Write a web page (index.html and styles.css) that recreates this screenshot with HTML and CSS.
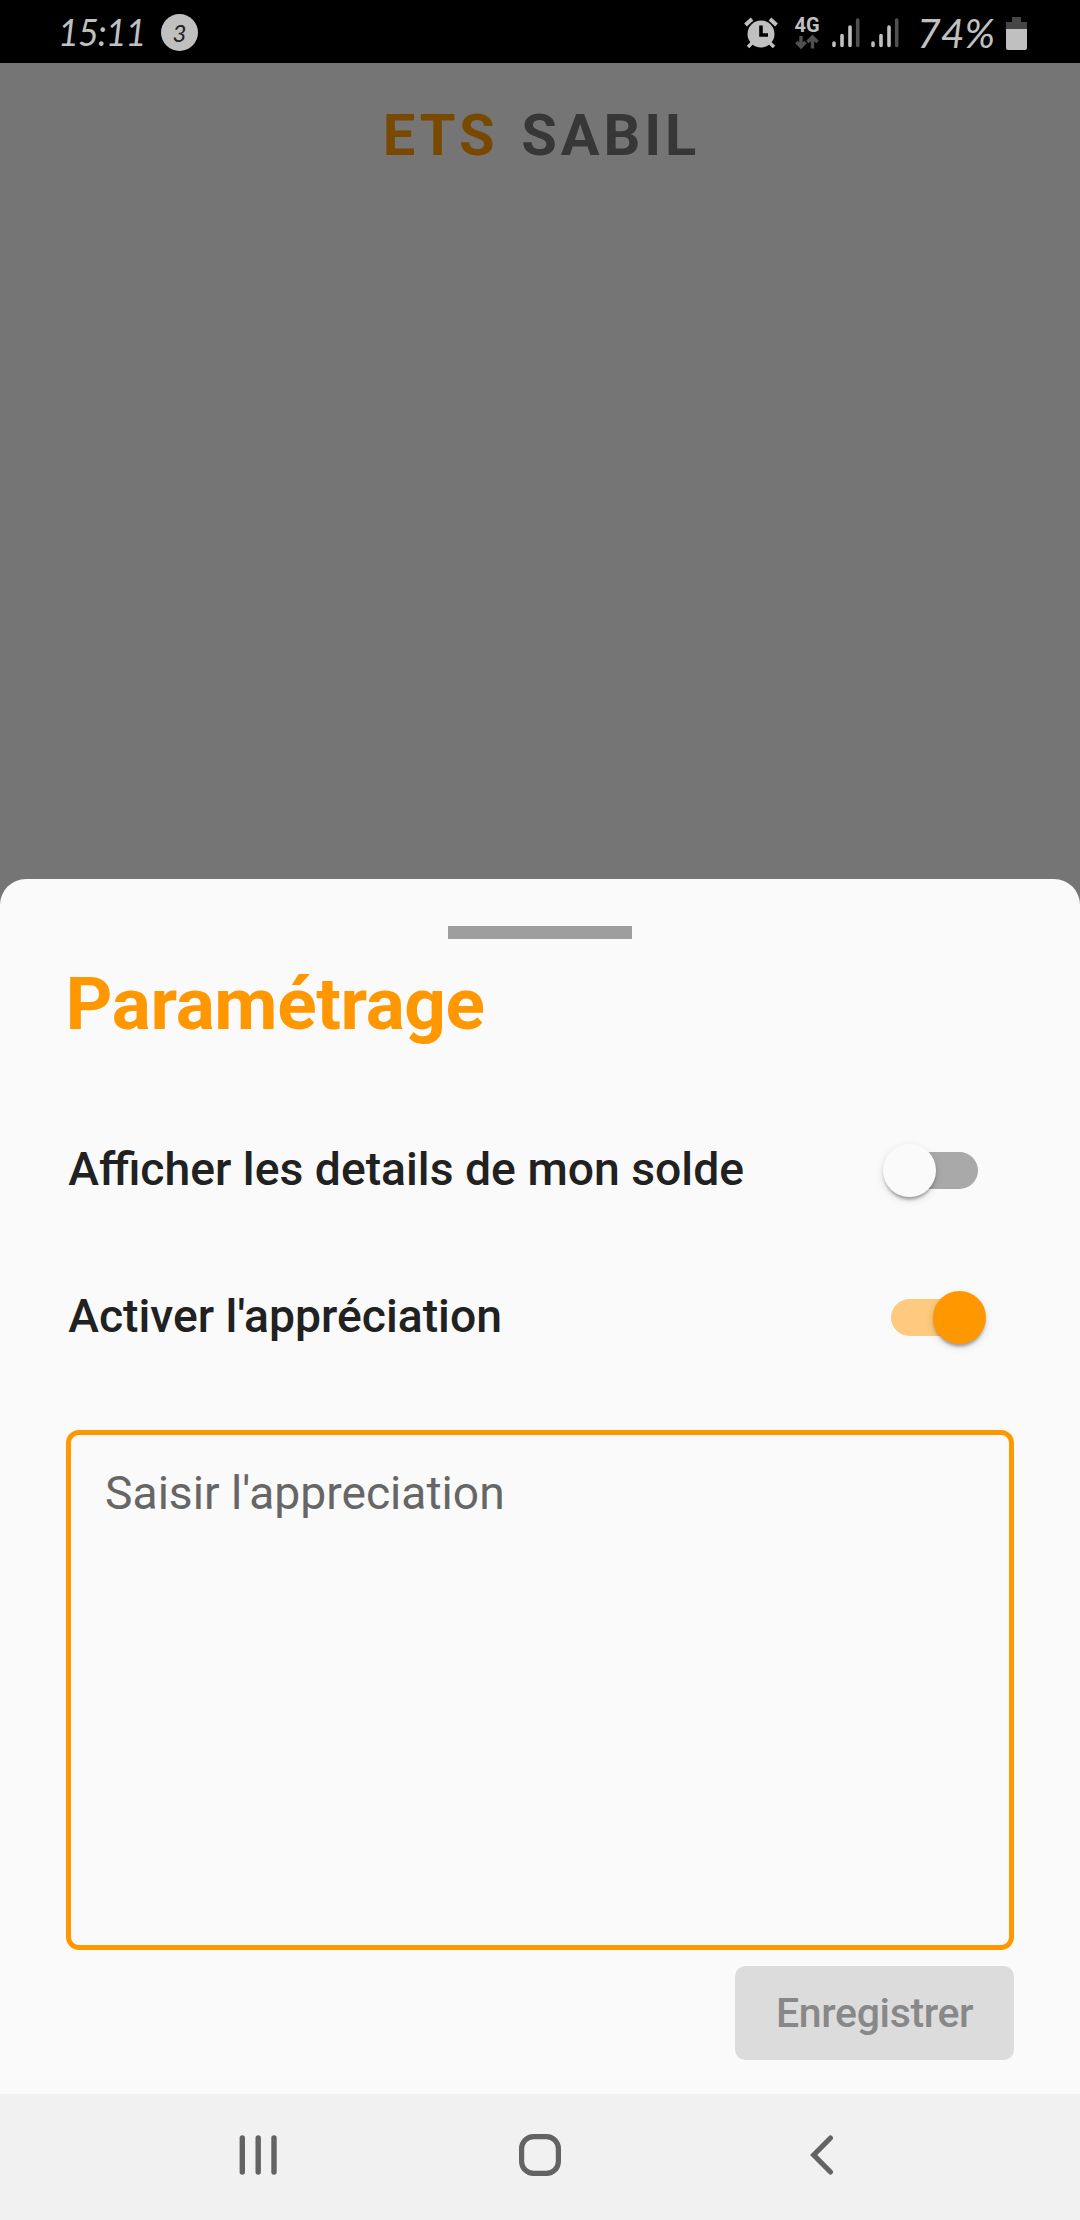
FILE: index.html
```html
<!DOCTYPE html>
<html lang="fr">
<head>
<meta charset="utf-8">
<title>ETS SABIL</title>
<link rel="stylesheet" href="styles.css">
</head>
<body>
<div class="screen">
  <header class="status">
    <span class="clock">15:11</span>
    <span class="count">3</span>
    <div class="status-right">
      <svg class="alarm" width="34" height="32" viewBox="0 0 34 32">
        <g stroke="#c0c0c0" stroke-linecap="butt" fill="none">
          <path d="M1.500 8 8 2M26 2l6.500 6" stroke-width="4"/>
          <path d="M8 26l-4 4M26 26l4 4" stroke-width="3.500"/>
        </g>
        <circle cx="17" cy="17" r="13.500" fill="#c0c0c0"/>
        <path d="M17 8.500v9.500h7" fill="none" stroke="#000" stroke-width="3.600"/>
      </svg>
      <div class="network">
        <span class="network-type">4G</span>
        <svg width="24" height="14" viewBox="0 0 24 14" fill="none" stroke="#505050" stroke-width="3.400">
          <path d="M6 1v11M1.500 7 6 11.800 10.500 7M17.500 13.500V2M12.500 7 17.500 2l5 5"/>
        </svg>
      </div>
      <svg class="signal" width="28" height="30" viewBox="0 0 28 30" stroke-width="3.600" stroke-linecap="round">
        <path d="M2 25v2.500M10 17.500v10M18 9v18.500" stroke="#c0c0c0"/><path d="M25.700 2v25.500" stroke="#505050"/>
      </svg>
      <svg class="signal" width="28" height="30" viewBox="0 0 28 30" stroke-width="3.600" stroke-linecap="round">
        <path d="M2 25v2.500M10 17.500v10M18 9v18.500" stroke="#c0c0c0"/><path d="M25.700 2v25.500" stroke="#505050"/>
      </svg>
      <span class="percent">74%</span>
      <svg width="21" height="33" viewBox="0 0 21 33">
        <path d="M6 0h9v5h6v8H0V5h6z" fill="#464646"/>
        <path d="M0 12h21v19q0 2-2 2H2q-2 0-2-2z" fill="#c0c0c0"/>
      </svg>
    </div>
  </header>

  <div class="backdrop">
    <h1 class="brand"><span class="brand-accent">ETS</span> SABIL</h1>
  </div>

  <main class="sheet">
    <div class="handle"></div>
    <h2 class="title">Paramétrage</h2>
    <div class="row">
      <span class="label">Afficher les details de mon solde</span>
      <span class="switch"><i class="thumb"></i></span>
    </div>
    <div class="row">
      <span class="label">Activer l'appréciation</span>
      <span class="switch switch-on"><i class="thumb"></i></span>
    </div>
    <div class="field">Saisir l'appreciation</div>
    <button class="save" disabled>Enregistrer</button>
  </main>

  <nav class="navbar">
    <svg width="44" height="44" viewBox="0 0 44 44" stroke="#636363" stroke-width="5.400" stroke-linecap="round">
      <path d="M6.300 5v34M22.200 5v34M38 5v34"/>
    </svg>
    <svg width="44" height="44" viewBox="0 0 44 44" fill="none" stroke="#636363" stroke-width="5.200">
      <rect x="3.600" y="3.600" width="36.800" height="36.800" rx="12"/>
    </svg>
    <svg width="44" height="44" viewBox="0 0 44 44" fill="none" stroke="#636363" stroke-width="5.200" stroke-linecap="round">
      <path d="M30.500 5 13.700 22l16.800 17"/>
    </svg>
  </nav>
</div>
</body>
</html>
```
FILE: styles.css
```css
* { box-sizing: border-box; }

body {
  margin: 0;
  background: #757575;
  font-family: Roboto, "Liberation Sans", sans-serif;
}

.screen {
  display: flex;
  flex-direction: column;
  width: 1080px;
  height: 2220px;
  background: #757575;
}

.status {
  display: flex;
  align-items: center;
  flex: none;
  height: 63px;
  padding: 4px 53px 0 58px;
  background: #000;
  color: #c0c0c0;
}

.clock {
  width: 103px;
  margin-top: -3px;
  font: italic 400 36px/56px Lato, sans-serif;
  letter-spacing: -1px;
  white-space: nowrap;
}

.count {
  width: 37px;
  height: 37px;
  margin-top: -3px;
  border-radius: 50%;
  background: #c0c0c0;
  color: #222;
  font: italic 400 24px/37px Lato, sans-serif;
  text-align: center;
}

.status-right {
  display: flex;
  align-items: center;
  margin-left: auto;
}

.alarm {
  margin-top: -2px;
  margin-right: 16px;
}

.network {
  display: flex;
  flex-direction: column;
  align-items: center;
  width: 26px;
  margin-top: -3px;
  margin-right: 12px;
}

.network-type {
  font-size: 20px;
  font-weight: 700;
  line-height: 19px;
}

.signal {
  margin-top: -2px;
  margin-right: 11px;
}

.percent {
  width: 87px;
  margin: -1px 2px 0 7px;
  font: italic 400 41px/56px Lato, sans-serif;
  white-space: nowrap;
}

.backdrop {
  flex: none;
  height: 816px;
}

.brand {
  margin: 0;
  padding-left: 3px;
  color: #373737;
  font-size: 57.750px;
  font-weight: 700;
  line-height: 144px;
  letter-spacing: 3.940px;
  word-spacing: 4.500px;
  text-align: center;
}

.brand-accent { color: #794900; }

.sheet {
  display: flex;
  flex-direction: column;
  flex: none;
  height: 1215px;
  padding: 47px 65.600px 0;
  border-radius: 26px 26px 0 0;
  background: #fafafa;
}

.handle {
  flex: none;
  align-self: center;
  width: 184px;
  height: 13.300px;
  background: #9e9e9e;
}

.title {
  margin: 21.700px 0 50px;
  color: #ff9800;
  font-size: 73px;
  font-weight: 700;
  line-height: 86px;
  letter-spacing: -.4px;
}

.row {
  display: flex;
  align-items: center;
  justify-content: space-between;
  flex: none;
  height: 147px;
  padding: 0 36.800px 0 2.600px;
}

.label {
  margin-top: -2px;
  color: #212121;
  font-size: 46.300px;
  font-weight: 500;
  line-height: 56px;
}

.switch {
  display: flex;
  align-items: center;
  width: 86.600px;
  height: 36.750px;
  border-radius: 19px;
  background: #a9a9a9;
}

.thumb {
  flex: none;
  width: 52.500px;
  height: 52.500px;
  margin: 0 -7.900px;
  border-radius: 50%;
  background: #fafafa;
  box-shadow: 0 5px 3px -3px rgba(0, 0, 0, .2), 0 3px 3px rgba(0, 0, 0, .14), 0 3px 8px rgba(0, 0, 0, .12);
}

.switch-on {
  justify-content: flex-end;
  background: #fdca7f;
}

.switch-on .thumb { background: #ff9800; }

.field {
  flex: none;
  height: 520px;
  margin-top: 39px;
  padding: 30px 34.500px;
  border: 5.250px solid #ff9800;
  border-radius: 13px;
  color: #666;
  font-size: 46.200px;
  line-height: 56px;
}

.save {
  align-self: flex-end;
  width: 279.500px;
  height: 94.500px;
  margin-top: 15.700px;
  padding: 0;
  border: 0;
  border-radius: 10.500px;
  background: #dcdcdc;
  color: #888;
  font: 500 41px/92px Roboto, sans-serif;
  letter-spacing: -.35px;
}

.navbar {
  display: flex;
  align-items: center;
  justify-content: space-between;
  flex: none;
  height: 126px;
  padding: 0 236px 4px;
  background: #f1f1f1;
}
```
